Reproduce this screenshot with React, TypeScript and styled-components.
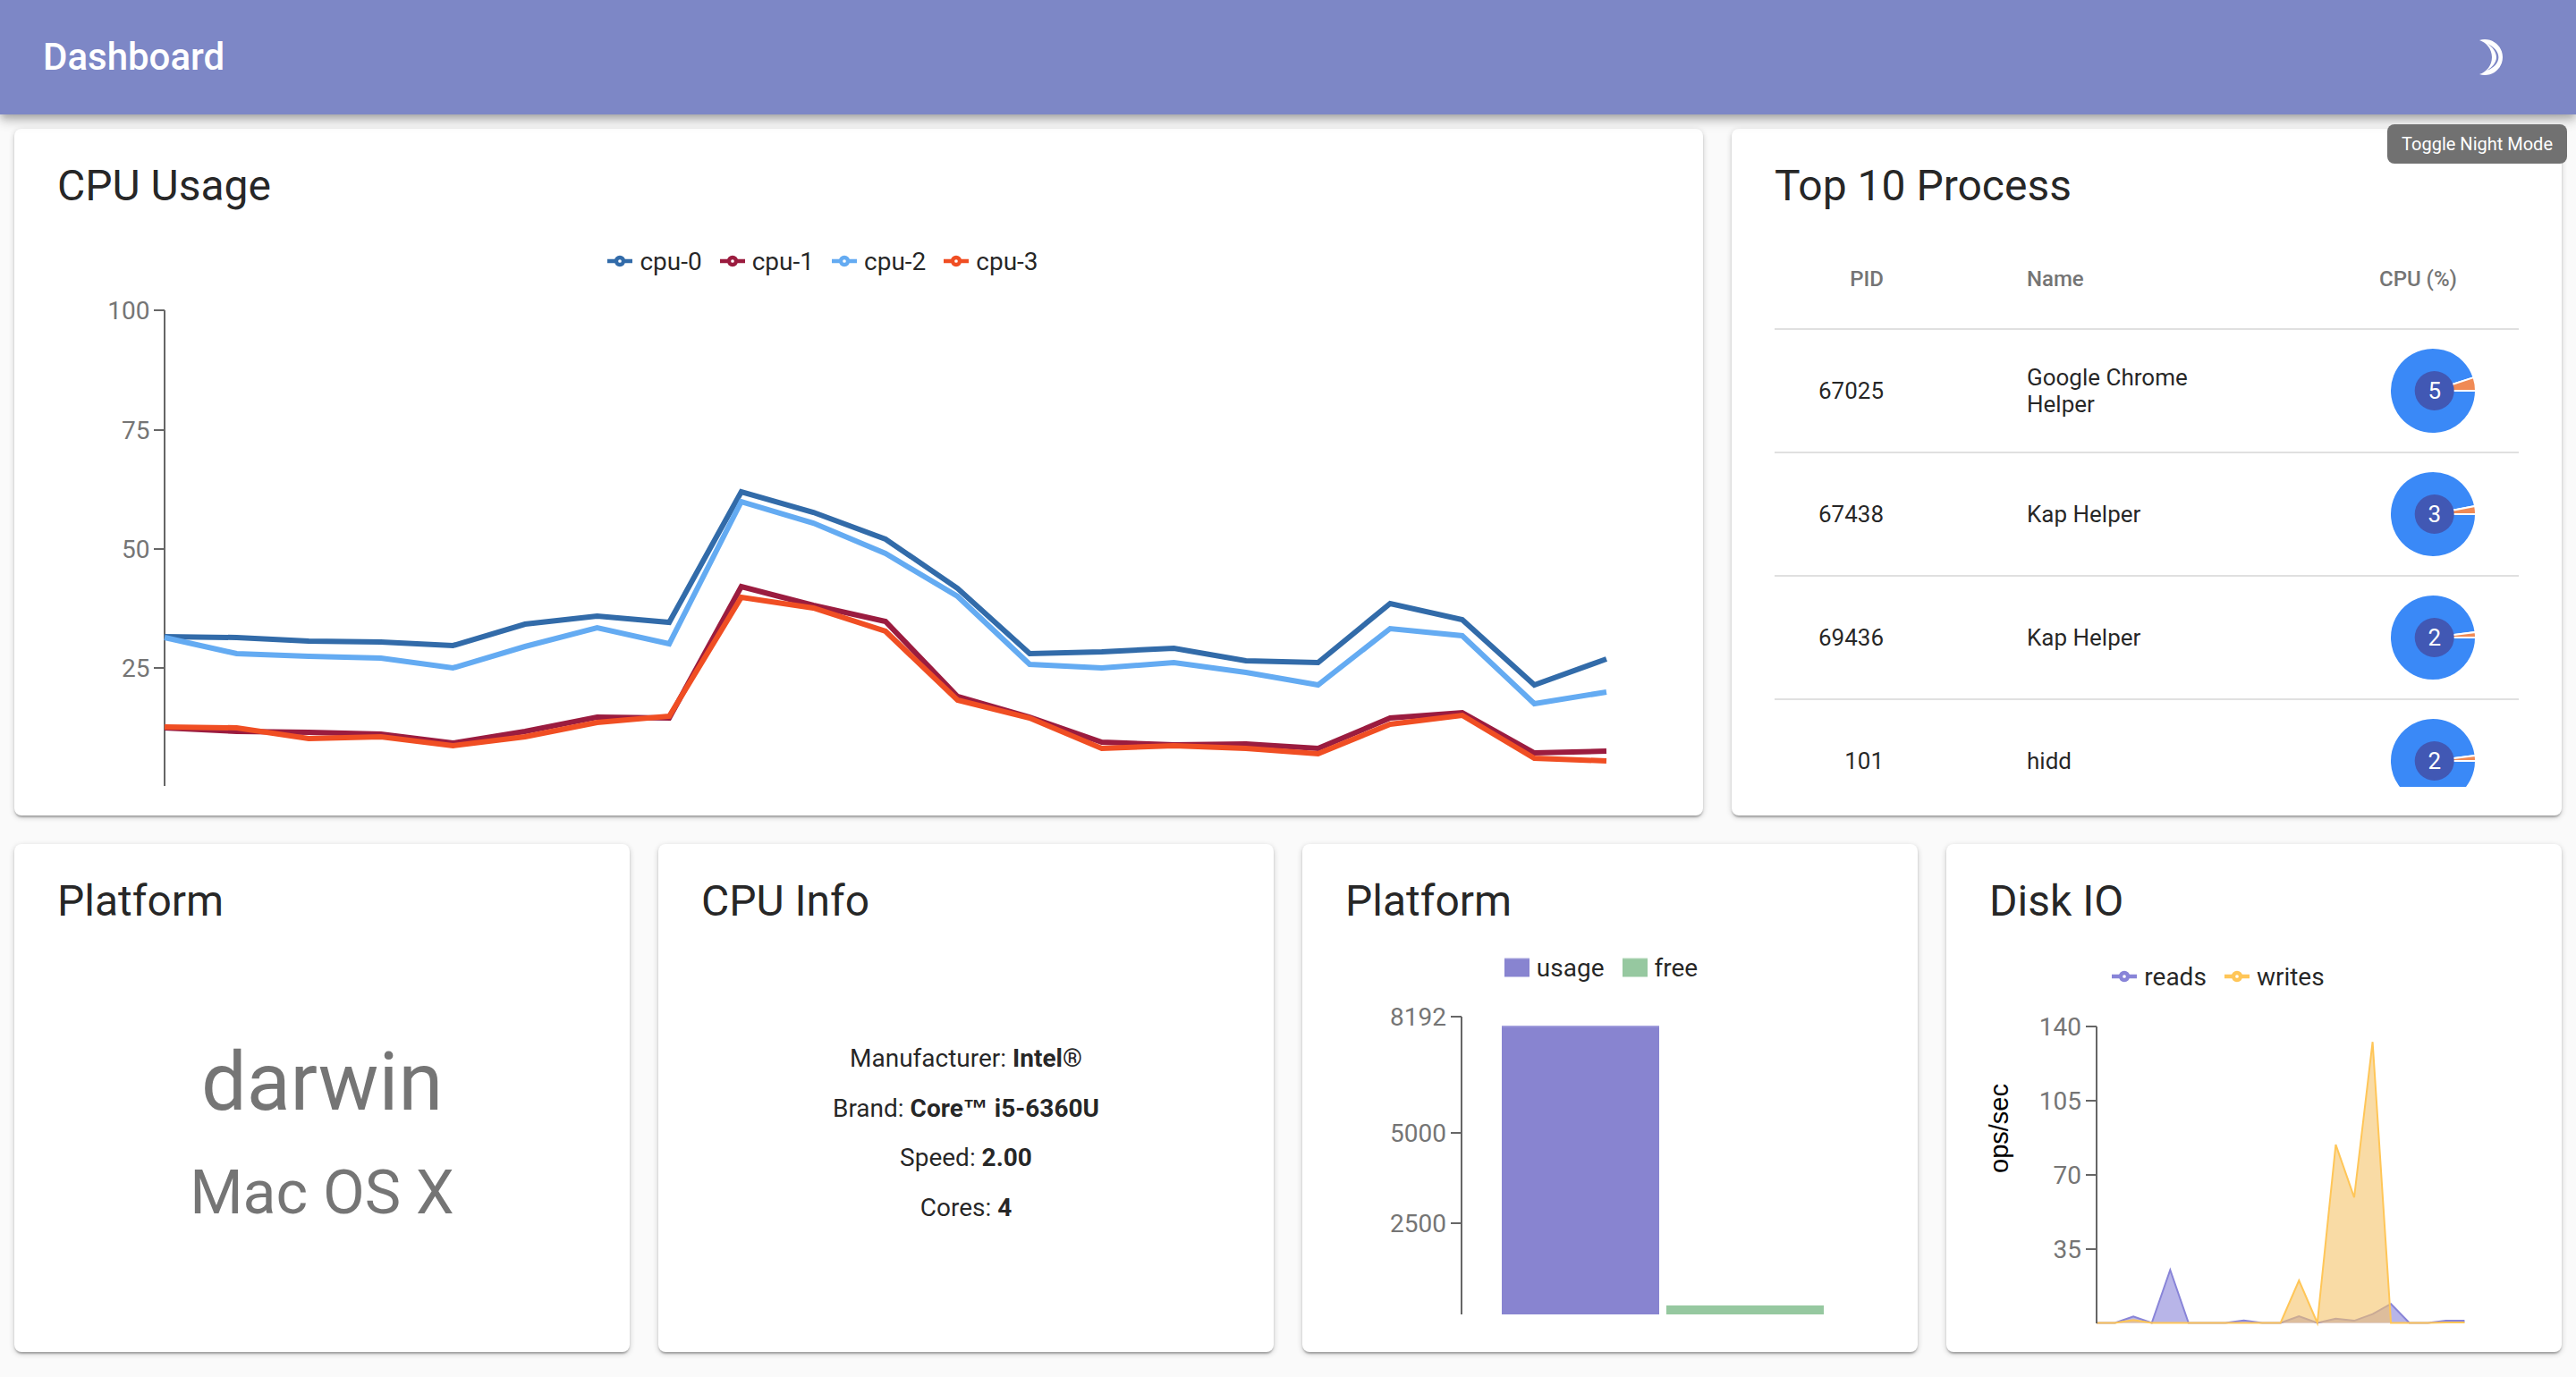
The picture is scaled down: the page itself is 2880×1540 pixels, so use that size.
import React from "react";
import styled, { createGlobalStyle } from "styled-components";

const Global = createGlobalStyle`
  html, body { margin: 0; padding: 0; background: #fafafa; }
  body { font-family: Roboto, "Liberation Sans", sans-serif; color: rgba(0,0,0,.87); }
`;

const Page = styled.div`
  position: relative;
  width: 2880px;
  height: 1540px;
  overflow: hidden;
`;
const AppBar = styled.header`
  position: relative;
  z-index: 2;
  height: 128px;
  padding: 0 48px;
  box-sizing: border-box;
  display: flex;
  align-items: center;
  justify-content: space-between;
  background: #7d87c6;
  color: #fff;
  box-shadow: 0 4px 8px -2px rgba(0,0,0,.2), 0 8px 10px 0 rgba(0,0,0,.14), 0 2px 20px 0 rgba(0,0,0,.12);
`;
const AppTitle = styled.h1`
  margin: 0;
  font-size: 42px;
  font-weight: 500;
  line-height: 56px;
`;
const IconButton = styled.div`
  width: 96px;
  height: 96px;
  display: flex;
  align-items: center;
  justify-content: center;
`;
const Tooltip = styled.div`
  position: absolute;
  z-index: 3;
  top: 139px;
  right: 10px;
  padding: 8px 16px;
  border-radius: 8px;
  background: #717171;
  color: #fff;
  font-size: 20px;
  line-height: 28px;
`;
const Grid = styled.main`
  display: grid;
  grid-template-columns: repeat(12, 208px);
  grid-template-rows: 768px 568px;
  gap: 32px;
  padding: 16px;
`;
const Card = styled.section<{ $span: number }>`
  grid-column: span ${(p) => p.$span};
  box-sizing: border-box;
  padding: 32px 48px;
  background: #fff;
  border-radius: 8px;
  display: flex;
  flex-direction: column;
  min-height: 0;
  box-shadow: 0 2px 6px 0 rgba(0,0,0,.2), 0 2px 2px 0 rgba(0,0,0,.14), 0 4px 2px -2px rgba(0,0,0,.12);
`;
const CardTitle = styled.h2`
  margin: 0;
  font-size: 48px;
  font-weight: 400;
  line-height: 64px;
  color: rgba(0,0,0,.87);
`;
const Legend = styled.ul<{ $top: number; $right: number }>`
  list-style: none;
  box-sizing: border-box;
  margin: ${(p) => p.$top}px 0 0;
  padding: 0 ${(p) => p.$right}px 2px 0;
  height: 40px;
  display: flex;
  align-items: center;
  justify-content: center;
  font-size: 28px;
`;
const LegendItem = styled.li`
  display: flex;
  align-items: center;
  margin-right: 20px;
`;
const LegendIcon = styled.svg`
  width: 28px;
  height: 28px;
  margin-right: 8px;
  display: block;
`;
const Plot = styled.svg`
  display: block;
  flex: none;
  overflow: visible;
  font-family: Roboto, sans-serif;
`;
const AxisLine = styled.path`
  stroke: #666;
  stroke-width: 2;
  fill: none;
`;
const TickLabel = styled.text`
  font-size: 28px;
  fill: #757575;
  text-anchor: end;
`;
const YTitle = styled.text`
  font-family: "Liberation Sans", Arial, sans-serif;
  font-size: 29px;
  fill: #000;
  text-anchor: middle;
`;
const TableClip = styled.div`
  margin-top: 16px;
  height: 624px;
  overflow: hidden;
`;
const Table = styled.table`
  width: 832px;
  table-layout: fixed;
  border-collapse: collapse;
`;
const HeadCell = styled.th<{ $align: string; $pad: string; $w: number }>`
  width: ${(p) => p.$w}px;
  height: 112px;
  box-sizing: border-box;
  padding: ${(p) => p.$pad};
  text-align: ${(p) => p.$align};
  font-size: 24px;
  font-weight: 500;
  color: #757575;
  border-bottom: 2px solid #e0e0e0;
`;
const Cell = styled.td<{ $align: string; $pad: string }>`
  height: 138px;
  box-sizing: border-box;
  padding: ${(p) => p.$pad};
  text-align: ${(p) => p.$align};
  font-size: 26px;
  color: rgba(0,0,0,.87);
  border-bottom: 2px solid #e0e0e0;
`;
const NameText = styled.div`
  max-width: 220px;
`;
const PieSvg = styled.svg`
  display: block;
  margin-left: auto;
`;
const PieLabel = styled.text`
  font-family: Roboto, sans-serif;
  font-size: 26px;
  fill: #fff;
  text-anchor: middle;
`;
const Center = styled.div`
  flex: 1;
  display: flex;
  flex-direction: column;
  align-items: center;
  justify-content: center;
`;
const InfoCenter = styled(Center)`
  padding-top: 14px;
`;
const OsName = styled.div`
  margin-top: 12px;
  font-size: 90px;
  line-height: 104px;
  color: #757575;
`;
const OsDistro = styled.div`
  margin-top: 31px;
  font-size: 68px;
  line-height: 80px;
  color: #757575;
`;
const InfoLine = styled.p`
  margin: 0 0 14.5px;
  font-size: 28px;
  line-height: 41px;
  color: rgba(0,0,0,.87);
  &:last-child { margin-bottom: 0; }
`;
const TradeMark = styled.span`
  font-family: "Liberation Sans", sans-serif;
`;

const xs = (i: number) => 184 + i * 80.6;
const line = (ys: number[]) => ys.map((y, i) => `${i ? "L" : "M"}${xs(i).toFixed(1)} ${y}`).join(" ");

const cpu = [
  { name: "cpu-0", color: "#326ba9", ys: [712,713,717,718,722,698,689,696,550,573,603,658,731,729,725,739,741,675,693,766,737] },
  { name: "cpu-1", color: "#9b1c3f", ys: [814,818,819,821,831,818,802,803,656,677,695,779,802,830,833,832,837,803,797,842,840] },
  { name: "cpu-2", color: "#64abf2", ys: [713,731,734,736,747,723,702,720,561,585,619,667,743,747,741,752,766,703,711,787,774] },
  { name: "cpu-3", color: "#f04e23", ys: [813,814,826,824,834,824,808,801,668,680,706,783,803,837,834,837,843,810,800,848,851] },
];

const LineIcon = ({ color }: { color: string }) => (
  <LegendIcon viewBox="0 0 32 32">
    <path
      d="M0,16h11.4A4.6,4.6,0,1,1,20.6,16H32M20.6,16A4.6,4.6,0,1,1,11.4,16"
      stroke={color}
      strokeWidth={5}
      fill="none"
    />
  </LegendIcon>
);
const RectIcon = ({ color }: { color: string }) => (
  <LegendIcon viewBox="0 0 32 32">
    <path d="M0,4h32v24h-32z" fill={color} />
    <path d="M0,4.5h32" stroke="#fff" strokeOpacity={0.3} strokeWidth={1.5} />
  </LegendIcon>
);

const Moon = () => (
  <svg width="48" height="48" viewBox="0 0 24 24">
    <path
      fill="#fff"
      fillRule="evenodd"
      d="M9 2c-1.05 0-2.05.16-3 .46 4.06 1.27 7 5.06 7 9.54 0 4.48-2.94 8.27-7 9.54.95.3 1.95.46 3 .46 5.52 0 10-4.48 10-10S14.52 2 9 2zM10.3 4.2C13.8 6 16.7 8.5 16.7 12c0 3.5-2.9 6-6.4 7.4C13.2 17.5 15.5 15 15.5 12c0-3-2.3-5.8-5.2-7.8z"
    />
  </svg>
);

const Pie = ({ value }: { value: number }) => {
  const r = 48;
  const c = 49;
  const a = (value * 3.6 * Math.PI) / 180;
  const ex = c + r * Math.cos(a);
  const ey = c - r * Math.sin(a);
  return (
    <PieSvg width="98" height="98" viewBox="0 0 98 98">
      <path d={`M${c} ${c}L${ex} ${ey}A${r} ${r} 0 1 0 ${c + r} ${c}Z`} fill="#3a89f7" stroke="#fff" strokeWidth={2} />
      <path d={`M${c} ${c}L${c + r} ${c}A${r} ${r} 0 0 0 ${ex} ${ey}Z`} fill="#f08a55" stroke="#fff" strokeWidth={2} />
      <circle cx={50.7} cy={49} r={22} fill="#4158b4" />
      <PieLabel x={50.7} y={58}>{value}</PieLabel>
    </PieSvg>
  );
};

const procs = [
  { pid: "67025", name: "Google Chrome Helper", cpu: 5 },
  { pid: "67438", name: "Kap Helper", cpu: 3 },
  { pid: "69436", name: "Kap Helper", cpu: 2 },
  { pid: "101", name: "hidd", cpu: 2 },
];

const diskX = (i: number) => 2344 + i * 20.57;
const diskY = (z: number) => +(920 + z / 2.529).toFixed(1);
const reads = [1415,1415,1397,1415,1265,1415,1415,1415,1408,1415,1415,1396,1415,1403,1409,1390,1361,1415,1415,1409,1409];
const writes = [1415,1415,1407,1415,1415,1415,1415,1415,1415,1415,1415,1295,1415,911,1060,620,1415,1415,1415,1414,1414];
const areaLine = (v: number[]) => v.map((z, i) => `${i ? "L" : "M"}${diskX(i).toFixed(1)} ${diskY(z)}`).join(" ");
const areaFill = (v: number[]) => `${areaLine(v)} L${diskX(20).toFixed(1)} ${diskY(1415)} L2344 ${diskY(1415)} Z`;

export default function App() {
  return (
    <Page>
      <Global />
      <AppBar>
        <AppTitle>Dashboard</AppTitle>
        <IconButton><Moon /></IconButton>
      </AppBar>
      <Tooltip>Toggle Night Mode</Tooltip>
      <Grid>
        <Card $span={8}>
          <CardTitle>CPU Usage</CardTitle>
          <Legend $top={33} $right={60}>
            {cpu.map((c) => (
              <LegendItem key={c.name}><LineIcon color={c.color} />{c.name}</LegendItem>
            ))}
          </Legend>
          <Plot width="1792" height="567" viewBox="64 313 1792 567">
            <AxisLine d="M184 347V879M172 347H184M172 481H184M172 614H184M172 747H184" />
            <TickLabel x="167.5" y="357">100</TickLabel>
            <TickLabel x="167.5" y="491">75</TickLabel>
            <TickLabel x="167.5" y="624">50</TickLabel>
            <TickLabel x="167.5" y="757">25</TickLabel>
            {cpu.map((c) => (
              <path key={c.name} d={line(c.ys)} stroke={c.color} strokeWidth={6} fill="none" />
            ))}
          </Plot>
        </Card>
        <Card $span={4}>
          <CardTitle>Top 10 Process</CardTitle>
          <TableClip>
            <Table>
              <thead>
                <tr>
                  <HeadCell $w={170} $align="right" $pad="0 48px 0 0">PID</HeadCell>
                  <HeadCell $w={442} $align="left" $pad="0 0 0 112px">Name</HeadCell>
                  <HeadCell $w={220} $align="right" $pad="0 69px 0 0">CPU (%)</HeadCell>
                </tr>
              </thead>
              <tbody>
                {procs.map((p) => (
                  <tr key={p.pid}>
                    <Cell $align="right" $pad="0 48px 0 0">{p.pid}</Cell>
                    <Cell $align="left" $pad="0 0 0 112px"><NameText>{p.name}</NameText></Cell>
                    <Cell $align="right" $pad="0 47px 0 0"><Pie value={p.cpu} /></Cell>
                  </tr>
                ))}
              </tbody>
            </Table>
          </TableClip>
        </Card>
        <Card $span={3}>
          <CardTitle>Platform</CardTitle>
          <Center>
            <OsName>darwin</OsName>
            <OsDistro>Mac OS X</OsDistro>
          </Center>
        </Card>
        <Card $span={3}>
          <CardTitle>CPU Info</CardTitle>
          <InfoCenter>
            <InfoLine>Manufacturer: <b>Intel®</b></InfoLine>
            <InfoLine>Brand: <b>Core<TradeMark>™</TradeMark> i5-6360U</b></InfoLine>
            <InfoLine>Speed: <b>2.00</b></InfoLine>
            <InfoLine>Cores: <b>4</b></InfoLine>
          </InfoCenter>
        </Card>
        <Card $span={3}>
          <CardTitle>Platform</CardTitle>
          <Legend $top={23} $right={0}>
            <LegendItem><RectIcon color="#8884d0" />usage</LegendItem>
            <LegendItem><RectIcon color="#96c8a0" />free</LegendItem>
          </Legend>
          <Plot width="592" height="377" viewBox="1504 1103 592 377">
            <AxisLine d="M1634 1137V1470M1622 1137H1634M1622 1267H1634M1622 1368H1634" />
            <TickLabel x="1617" y="1147">8192</TickLabel>
            <TickLabel x="1617" y="1277">5000</TickLabel>
            <TickLabel x="1617" y="1378">2500</TickLabel>
            <rect x="1679" y="1147" width="176" height="323" fill="#8884d0" />
            <rect x="1679" y="1147" width="176" height="1.5" fill="#a5a2de" />
            <rect x="1863" y="1460" width="176" height="10" fill="#96c8a0" />
          </Plot>
        </Card>
        <Card $span={3}>
          <CardTitle>Disk IO</CardTitle>
          <Legend $top={33} $right={60}>
            <LegendItem><LineIcon color="#8884d8" />reads</LegendItem>
            <LegendItem><LineIcon color="#ffc658" />writes</LegendItem>
          </Legend>
          <Plot width="592" height="367" viewBox="2224 1113 592 367">
            <YTitle transform="translate(2245 1262) rotate(-90)">ops/sec</YTitle>
            <path d={areaFill(reads)} fill="#8884d8" fillOpacity={0.6} />
            <path d={areaLine(reads)} stroke="#8884d8" strokeWidth={2} fill="none" />
            <path d={areaFill(writes)} fill="#f5c369" fillOpacity={0.6} />
            <path d={areaLine(writes)} stroke="#ffc658" strokeWidth={2} fill="none" />
            <AxisLine d="M2344 1148V1480M2332 1148H2344M2332 1231H2344M2332 1314H2344M2332 1397H2344" />
            <TickLabel x="2327" y="1158">140</TickLabel>
            <TickLabel x="2327" y="1241">105</TickLabel>
            <TickLabel x="2327" y="1324">70</TickLabel>
            <TickLabel x="2327" y="1407">35</TickLabel>
          </Plot>
        </Card>
      </Grid>
    </Page>
  );
}
